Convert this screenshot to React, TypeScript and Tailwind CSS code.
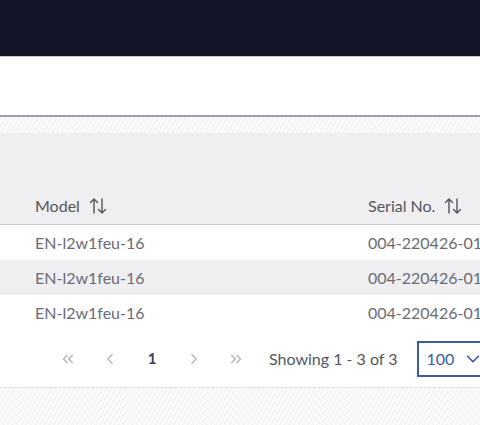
import { ChevronDown, ChevronLeft, ChevronRight, ChevronsLeft, ChevronsRight } from "lucide-react";

const rows = [
  { model: "EN-l2w1feu-16", serial: "004-220426-0112" },
  { model: "EN-l2w1feu-16", serial: "004-220426-0112" },
  { model: "EN-l2w1feu-16", serial: "004-220426-0112" },
];

const stripes = {
  backgroundImage:
    "repeating-linear-gradient(120deg, #f4f4f7 0px, #f4f4f7 2px, #fbfbfc 2px, #fbfbfc 4px)",
};

function SortIcon() {
  return (
    <svg width="18" height="18" viewBox="0 0 18 18" fill="none" stroke="#5b5c66" strokeWidth="1.5" strokeLinecap="round" strokeLinejoin="round">
      <path d="M5 16V2M1.5 5.5 5 2l3.5 3.5" />
      <path d="M13 2v14M9.5 12.5 13 16l3.5-3.5" />
    </svg>
  );
}

export default function App() {
  return (
    <div className="h-[425px] w-[480px] overflow-hidden bg-white text-[16px]" style={{ fontFamily: "Lato, 'Open Sans', sans-serif" }}>
      {/* top bar */}
      <div className="h-[57px] border-b border-[#c9c9d2] bg-[#141529]" />
      {/* toolbar */}
      <div className="h-[60px] border-b-2 border-[#9c9caa] bg-white" />
      <div className="h-[16px]" style={stripes} />

      {/* table header */}
      <div className="flex h-[92px] items-end border-b border-[#c8c8cf] bg-[#efeff2] pb-[6px] text-[#55565f]">
        <div className="flex w-[368px] shrink-0 items-center gap-[9px] pl-[35px]">
          <span>Model</span>
          <SortIcon />
        </div>
        <div className="flex shrink-0 items-center gap-[9px] whitespace-nowrap">
          <span>Serial No.</span>
          <SortIcon />
        </div>
      </div>

      {/* rows */}
      {rows.map((r, i) => (
        <div key={i} className={`flex h-[35px] items-center whitespace-nowrap text-[#6a6b74] ${i % 2 === 1 ? "bg-[#efeff2]" : "bg-white"}`}>
          <div className="w-[368px] shrink-0 pl-[35px]">{r.model}</div>
          <div className="shrink-0">{r.serial}</div>
        </div>
      ))}

      {/* pagination */}
      <div className="flex h-[58px] items-center border-b border-[#e3e3ec] pl-[47px] whitespace-nowrap">
        <div className="flex items-center text-[#ababb4]">
          <span className="flex w-[42px] justify-center"><ChevronsLeft size={18} strokeWidth={1.5} /></span>
          <span className="flex w-[42px] justify-center"><ChevronLeft size={18} strokeWidth={1.5} /></span>
          <span className="flex w-[42px] justify-center text-[15px] font-bold text-[#3f4050]">1</span>
          <span className="flex w-[42px] justify-center"><ChevronRight size={18} strokeWidth={1.5} /></span>
          <span className="flex w-[42px] justify-center"><ChevronsRight size={18} strokeWidth={1.5} /></span>
        </div>
        <span className="ml-[12px] text-[#55565f]">Showing 1 - 3 of 3</span>
        <div className="ml-[19px] flex h-[36px] w-[90px] shrink-0 items-center gap-[8px] border-2 border-[#3a5aa6] pl-[8px] text-[#3a5aa6]">
          <span>100</span>
          <ChevronDown size={22} strokeWidth={1.8} />
        </div>
      </div>
      <div className="h-[40px]" style={stripes} />
    </div>
  );
}
